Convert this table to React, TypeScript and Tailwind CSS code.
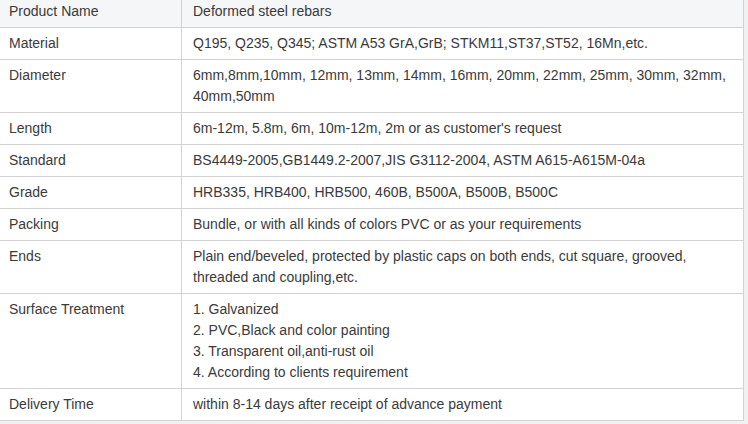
import React from 'react';

const rows: { label: string; value: string[] }[] = [
  { label: 'Material', value: ['Q195, Q235, Q345; ASTM A53 GrA,GrB; STKM11,ST37,ST52, 16Mn,etc.'] },
  {
    label: 'Diameter',
    value: ['6mm,8mm,10mm, 12mm, 13mm, 14mm, 16mm, 20mm, 22mm, 25mm, 30mm, 32mm, 40mm,50mm'],
  },
  { label: 'Length', value: ["6m-12m, 5.8m, 6m, 10m-12m, 2m or as customer's request"] },
  { label: 'Standard', value: ['BS4449-2005,GB1449.2-2007,JIS G3112-2004, ASTM A615-A615M-04a'] },
  { label: 'Grade', value: ['HRB335, HRB400, HRB500, 460B, B500A, B500B, B500C'] },
  { label: 'Packing', value: ['Bundle, or with all kinds of colors PVC or as your requirements'] },
  {
    label: 'Ends',
    value: ['Plain end/beveled, protected by plastic caps on both ends, cut square, grooved, threaded and coupling,etc.'],
  },
  {
    label: 'Surface Treatment',
    value: [
      '1. Galvanized',
      '2. PVC,Black and color painting',
      '3. Transparent oil,anti-rust oil',
      '4. According to clients requirement',
    ],
  },
  { label: 'Delivery Time', value: ['within 8-14 days after receipt of advance payment'] },
];

const App: React.FC = () => {
  return (
    <div className="w-[748px] h-[424px] overflow-hidden bg-[#f1f1f1] font-['Liberation_Sans',Arial,sans-serif] text-[14px] leading-[21px] text-[#3a3a3a]">
      <div className="w-[744px] bg-white">
        <table className="-mt-[5px] -ml-[3px] w-[747px] border-collapse table-fixed">
          <colgroup>
            <col className="w-[184px]" />
            <col />
          </colgroup>
          <tbody>
            {/* Header row */}
            <tr className="bg-[#f5f6f8]">
              <td className="border border-[#d2d2d2] pl-[11px] pr-2 pt-[5px] pb-[5px] align-top">Product Name</td>
              <td className="border border-[#d2d2d2] pl-[11px] pr-2 pt-[5px] pb-[5px] align-top">Deformed steel rebars</td>
            </tr>
            {rows.map(row => (
              <tr key={row.label}>
                <td className="border border-[#d2d2d2] pl-[11px] pr-2 pt-[5px] pb-[5px] align-top">{row.label}</td>
                <td className="border border-[#d2d2d2] pl-[11px] pr-[8px] pt-[5px] pb-[5px] align-top">
                  {row.value.map(line => (
                    <div key={line}>{line}</div>
                  ))}
                </td>
              </tr>
            ))}
          </tbody>
        </table>
      </div>
    </div>
  );
};

export default App;
